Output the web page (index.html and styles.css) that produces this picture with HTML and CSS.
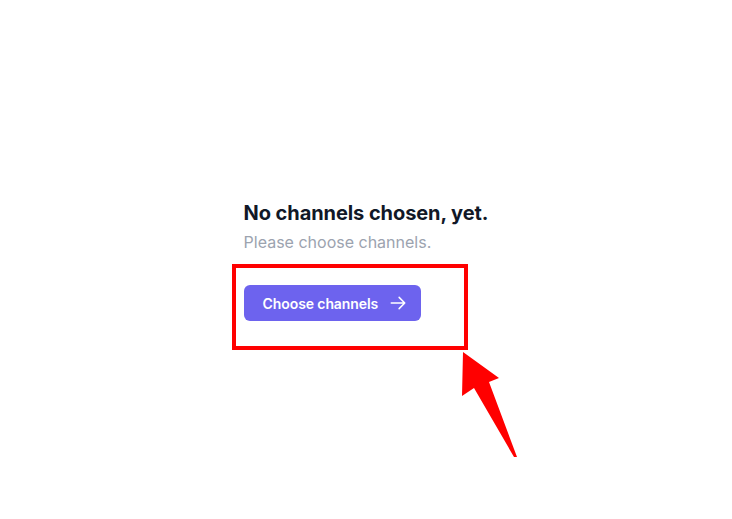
FILE: index.html
```html
<!DOCTYPE html>
<html lang="en">
<head>
<meta charset="utf-8">
<title>No channels</title>
<link rel="stylesheet" href="styles.css">
</head>
<body>
<main class="page">
  <section class="empty">
    <h1 class="empty-title">No channels chosen, yet.</h1>
    <p class="empty-text">Please choose channels.</p>
    <button class="btn" type="button">
      <span>Choose channels</span>
      <svg class="btn-icon" viewBox="0 0 24 24" fill="none" stroke="currentColor" stroke-width="2" stroke-linecap="round" stroke-linejoin="round" aria-hidden="true">
        <path d="M13.5 4.5L21 12m0 0l-7.5 7.5M21 12H3"/>
      </svg>
    </button>
  </section>
  <div class="highlight"></div>
  <svg class="pointer" viewBox="0 0 732 519" aria-hidden="true">
    <polygon points="463,352 499,378 489,382 517,457 514,457 474,388 462,396" fill="#ff0000"/>
  </svg>
</main>
</body>
</html>
```
FILE: styles.css
```css
* { box-sizing: border-box; }
html, body { margin: 0; padding: 0; background: #ffffff; }
body {
  font-family: Inter, "Noto Sans", "Liberation Sans", sans-serif;
  width: 732px;
  height: 519px;
  overflow: hidden;
}
.page {
  position: relative;
  width: 732px;
  height: 519px;
  display: flex;
  align-items: center;
  justify-content: center;
}
.empty {
  display: flex;
  flex-direction: column;
  align-items: flex-start;
  margin-top: 1px;
}
.empty-title {
  margin: 0;
  font-size: 20px;
  line-height: 28px;
  font-weight: 700;
  letter-spacing: -0.08px;
  color: #111827;
}
.empty-text {
  margin: 3px 0 0;
  font-size: 16px;
  line-height: 24px;
  color: #9ca3af;
}
.btn {
  margin-top: 31px;
  display: inline-flex;
  align-items: center;
  gap: 11px;
  height: 36px;
  padding: 0 14px 0 19px;
  border: 0;
  border-radius: 6px;
  background: #6d63ee;
  color: #ffffff;
  font-family: inherit;
  font-size: 14px;
  font-weight: 600;
  letter-spacing: -0.1px;
  cursor: pointer;
}
.btn-icon { width: 18px; height: 18px; }
.highlight {
  position: absolute;
  left: 232px;
  top: 264px;
  width: 236px;
  height: 86px;
  border: 4px solid #ff0000;
}
.pointer {
  position: absolute;
  left: 0;
  top: 0;
  width: 732px;
  height: 519px;
  pointer-events: none;
}
```
